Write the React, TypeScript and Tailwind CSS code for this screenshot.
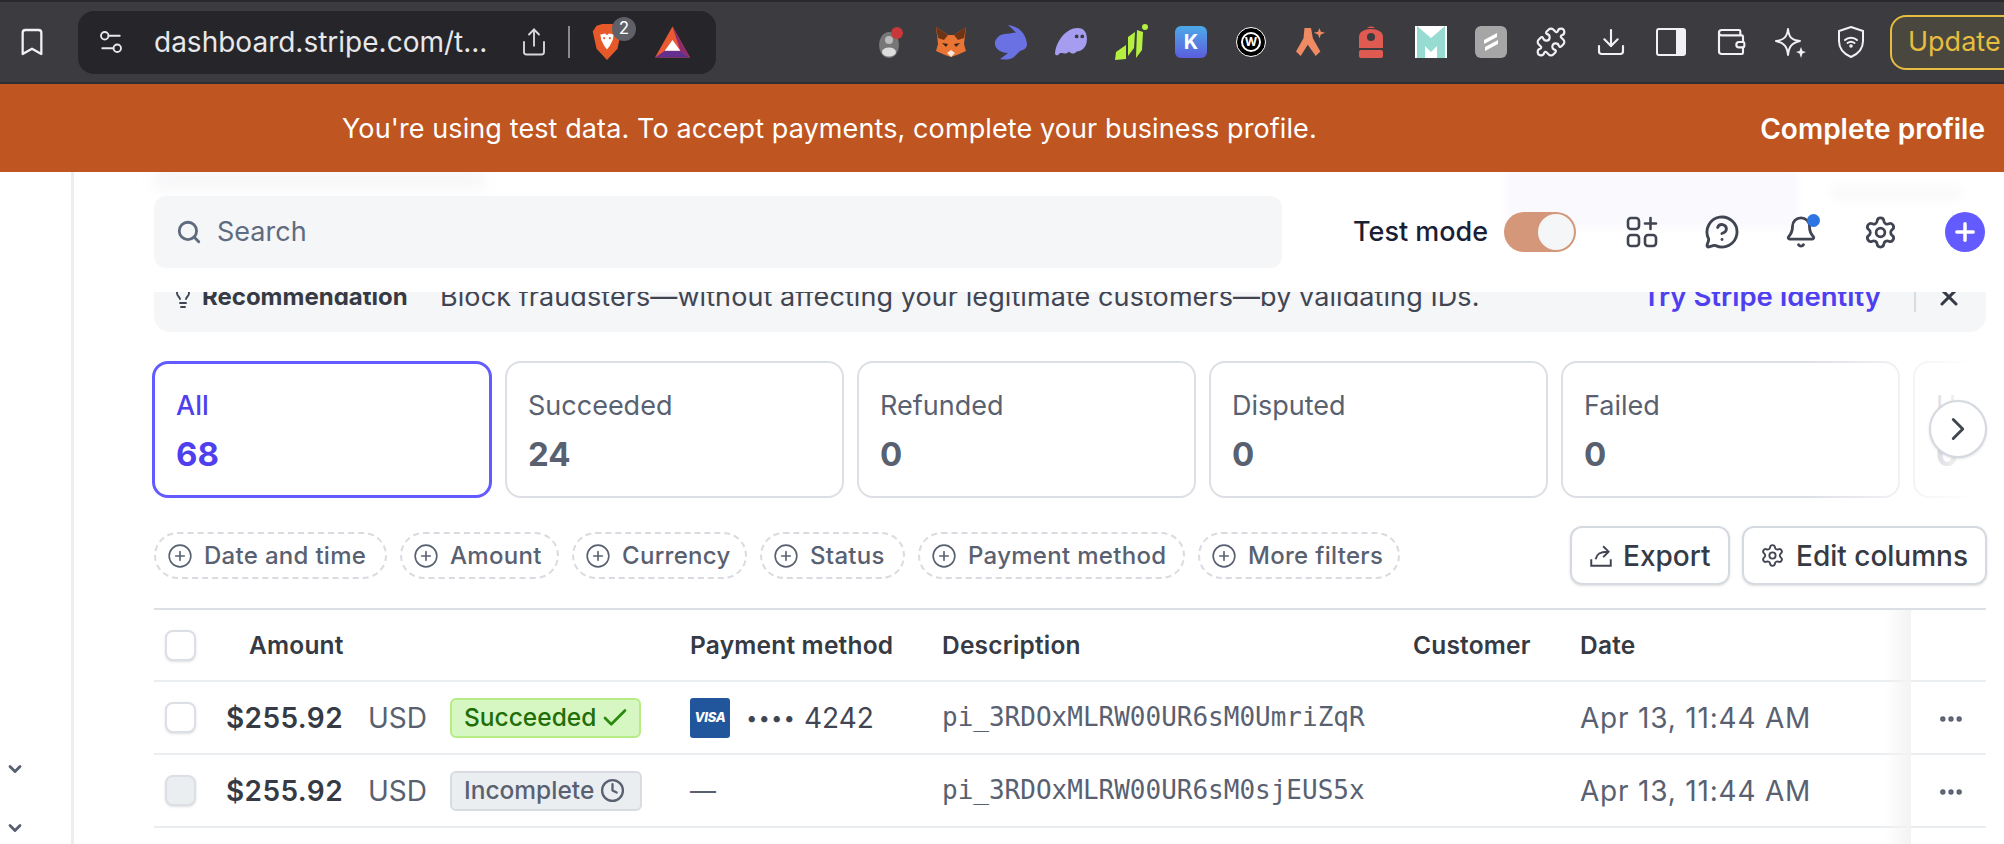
import React from "react"
import { Bell, Bookmark, Check, ChevronDown, ChevronRight, CirclePlus, Clock, Download, Ellipsis, Lightbulb, MessageCircleQuestion, Plus, Puzzle, Search, Settings, Settings2, Share, Wallet, X } from "lucide-react"

const font = "font-['Inter','Noto_Sans',sans-serif]"

const Tabs = [
    { label: "Succeeded", count: "24" },
    { label: "Refunded", count: "0" },
    { label: "Disputed", count: "0" },
    { label: "Failed", count: "0" },
]

const Filters = [
    { label: "Date and time", w: "w-[233px]" },
    { label: "Amount", w: "w-[159px]" },
    { label: "Currency", w: "w-[175px]" },
    { label: "Status", w: "w-[145px]" },
    { label: "Payment method", w: "w-[267px]" },
    { label: "More filters", w: "w-[202px]" },
]

const rowGrid = "grid grid-cols-[72px_464px_252px_471px_167px_1fr] items-center"

function BraveIcon() {
    return (
        <svg viewBox="0 0 32 40" className="w-[32px] h-[38px]">
            <path d="M5 3 L11 1 H21 L27 3 L31 9 L27 27 L16 39 L5 27 L1 9 Z" fill="#e8592a" />
            <path d="M9 12 L14 11 L16 13 L18 11 L23 12 L22 18 L19 24 L16 28 L13 24 L10 18 Z" fill="#fff" />
            <rect x="12" y="15" width="2" height="2" fill="#e8592a" />
            <rect x="18" y="15" width="2" height="2" fill="#e8592a" />
        </svg>
    )
}

function BatIcon() {
    return (
        <svg viewBox="0 0 36 32" className="w-[35px] h-[32px]">
            <path d="M18 0 L36 32 H0 Z" fill="#ea5a32" />
            <path d="M18 0 L36 32 L26 25 Z" fill="#8e2a6f" />
            <path d="M0 32 H36 L26 25 H10 Z" fill="#64308f" />
            <path d="M18 14 L26 25 H10 Z" fill="#fff" />
        </svg>
    )
}

function ExtIcon({ children }: { children: React.ReactNode }) {
    return <div className="w-[60px] shrink-0 flex justify-center items-center">{children}</div>
}

function Extensions() {
    return (
        <div className="flex items-center ml-[145px]">
            <ExtIcon>
                <svg viewBox="0 0 32 34" className="w-[32px] h-[34px]">
                    <ellipse cx="14" cy="20" rx="10" ry="13" fill="#777" />
                    <ellipse cx="14" cy="27" rx="7" ry="4.5" fill="#ddd" />
                    <circle cx="14" cy="15" r="4" fill="#bbb" />
                    <circle cx="22" cy="8" r="6" fill="#c8383a" />
                </svg>
            </ExtIcon>
            <ExtIcon>
                <svg viewBox="0 0 32 32" className="w-[32px] h-[32px]">
                    <path d="M1 1 L13 9 H19 L31 1 L29 18 L31 25 L22 29 L16 31 L10 29 L1 25 L3 18 Z" fill="#ea7434" />
                    <path d="M1 1 L13 9 L9 14 L3 12 Z M31 1 L19 9 L23 14 L29 12 Z" fill="#6e3416" />
                    <path d="M12 27 L16 24 L20 27 L16 31 Z" fill="#f5e7da" />
                    <path d="M7 17 L13 18 L11 21 Z M25 17 L19 18 L21 21 Z" fill="#33261c" />
                </svg>
            </ExtIcon>
            <ExtIcon>
                <svg viewBox="0 0 34 36" className="w-[34px] h-[36px]">
                    <path d="M14 1 C25 2 32 10 33 20 C33 24 30 26 26 27 L20 33 C16 36 11 36 6 35 L14 29 C6 29 0 24 1 18 C2 14 6 10 11 10 C15 10 19 8 22 9 C20 6 17 4 14 1 Z" fill="#6a71e3" />
                </svg>
            </ExtIcon>
            <ExtIcon>
                <svg viewBox="0 0 34 32" className="w-[34px] h-[30px]">
                    <path d="M0 28 C1 15 12 1 24 1 C31 1 34 6 34 13 C34 22 28 26 23 26 C21 29 17 29 15 26 C12 30 6 27 5 28 C3 31 0 31 0 28 Z" fill="#a79df0" />
                    <circle cx="23" cy="10" r="2" fill="#3b3b40" />
                    <circle cx="29" cy="10" r="2" fill="#3b3b40" />
                </svg>
            </ExtIcon>
            <ExtIcon>
                <svg viewBox="0 0 34 36" className="w-[34px] h-[36px]">
                    <path d="M1 36 L2 28 L12 21 L12 35 Z M14 32 L14 13 L21 8 L20 24 Z M22 34 L23 6 L29 8 L28 26 Z" fill="#b6f03e" />
                    <circle cx="31" cy="3" r="3" fill="#b6f03e" />
                </svg>
            </ExtIcon>
            <ExtIcon>
                <div className="w-[32px] h-[32px] rounded-md bg-gradient-to-b from-[#4aa9e8] to-[#5a5cdd] flex items-center justify-center text-white font-bold text-[20px] font-['Inter',sans-serif]">K</div>
            </ExtIcon>
            <ExtIcon>
                <div className="w-[30px] h-[30px] rounded-full bg-black border border-white flex items-center justify-center">
                    <div className="w-[20px] h-[20px] rounded-full border-2 border-white text-white font-bold text-[12px] leading-none flex items-center justify-center font-['Inter',sans-serif]">W</div>
                </div>
            </ExtIcon>
            <ExtIcon>
                <svg viewBox="0 0 32 32" className="w-[32px] h-[30px]">
                    <path d="M9 1 H16 L18 12 L26 26 L21 31 L12.5 19 L5 31 L0 26 L8 12 Z" fill="#ef8a62" />
                    <path d="M25 1 L26.5 5 L31 6 L26.5 8 L25 12 L23.5 8 L19 6 L23.5 5 Z" fill="#ef8a62" />
                </svg>
            </ExtIcon>
            <ExtIcon>
                <svg viewBox="0 0 24 32" className="w-[24px] h-[32px]">
                    <path d="M8 2 C10 0 14 0 16 2 Z" fill="#df5a50" />
                    <path d="M0 11 C0 6 5 3 12 3 C19 3 24 6 24 11 V22 H0 Z" fill="#df5a50" />
                    <rect y="24" width="24" height="8" rx="2" fill="#df5a50" />
                    <circle cx="12" cy="11" r="4" fill="#3b3b40" />
                </svg>
            </ExtIcon>
            <ExtIcon>
                <svg viewBox="0 0 32 32" className="w-[32px] h-[32px]">
                    <rect width="32" height="32" fill="#fff" />
                    <path d="M2 0 L16 12 L30 0 V32 H22 V20 L16 26 L10 20 V32 H2 Z" fill="#97dcd1" />
                </svg>
            </ExtIcon>
            <ExtIcon>
                <div className="w-[32px] h-[32px] rounded-md bg-[#a6a6a6] flex items-center justify-center">
                    <svg viewBox="0 0 32 32" className="w-[32px] h-[32px]">
                        <path d="M9 14 L22 7 V11 L9 18 Z M10 21 L23 14 V18 L10 25 Z" fill="#fff" />
                    </svg>
                </div>
            </ExtIcon>
            <ExtIcon><Puzzle className="w-[32px] h-[32px] text-[#f2f2f4]" strokeWidth={1.6} /></ExtIcon>
            <ExtIcon><Download className="w-[32px] h-[32px] text-[#f2f2f4]" strokeWidth={1.6} /></ExtIcon>
            <ExtIcon>
                <div className="w-[30px] h-[28px] rounded-[3px] border-2 border-[#f2f2f4] flex justify-end">
                    <div className="w-[8px] bg-[#f2f2f4]"></div>
                </div>
            </ExtIcon>
            <ExtIcon><Wallet className="w-[32px] h-[32px] text-[#f2f2f4]" strokeWidth={1.6} /></ExtIcon>
            <ExtIcon>
                <svg viewBox="0 0 32 32" fill="none" className="w-[32px] h-[32px]">
                    <path d="M13 3 C14 11 16 14 25 15 C17 17 14 20 13 29 C12 20 9 17 1 15 C9 14 12 11 13 3 Z" stroke="#f2f2f4" strokeWidth="2" strokeLinejoin="round" />
                    <path d="M26 21 L27.5 25 L31 26 L27.5 27.5 L26 32 L24.5 27.5 L21 26 L24.5 25 Z" fill="#f2f2f4" />
                </svg>
            </ExtIcon>
            <ExtIcon>
                <svg viewBox="0 0 28 32" fill="none" className="w-[28px] h-[32px]" stroke="#f2f2f4" strokeWidth="2">
                    <path d="M14 1 L26 5 V15 C26 23 21 28 14 31 C7 28 2 23 2 15 V5 Z" />
                    <path d="M8 14 C11 11 17 11 20 14 M10.5 17 C12.5 15.5 15.5 15.5 17.5 17" strokeLinecap="round" />
                    <circle cx="14" cy="20" r="0.8" />
                </svg>
            </ExtIcon>
            <div className="ml-[9px] shrink-0 w-[160px] h-[55px] rounded-[16px] border-2 border-[#e6bd3e] bg-[#4a473e] text-[#e6bd3e] text-[27px] flex items-center pl-[16px]">Update</div>
        </div>
    )
}

function BrowserBar() {
    return (
        <div className="h-[84px] bg-[#3b3b40] border-t-2 border-b-2 border-t-[#2a2a2e] border-b-[#2f2f33] flex items-center shrink-0 overflow-hidden">
            <div className="w-[78px] flex justify-center shrink-0 pr-[14px]">
                <Bookmark className="w-[32px] h-[34px] text-[#f2f2f4]" strokeWidth={1.7} />
            </div>
            <div className="w-[638px] h-[63px] shrink-0 rounded-[16px] bg-[#25252a] flex items-center relative text-[#e8e8ea]">
                <Settings2 className="w-[30px] h-[30px] ml-[18px] text-[#e8e8ea]" strokeWidth={1.5} />
                <span className="ml-[28px] text-[28px] whitespace-nowrap">dashboard.stripe.com/t...</span>
                <Share className="w-[30px] h-[32px] ml-[32px] text-[#d8d8da]" strokeWidth={1.5} />
                <div className="w-[2px] h-[32px] bg-[#8a8a8e] ml-[19px]"></div>
                <div className="ml-[21px]"><BraveIcon /></div>
                <div className="absolute left-[534px] top-[6px] w-[24px] h-[24px] rounded-full bg-[#5f6068] text-[17px] text-white flex items-center justify-center">2</div>
                <div className="ml-[32px]"><BatIcon /></div>
            </div>
            <Extensions />
        </div>
    )
}

function TestBanner() {
    return (
        <div className="h-[88px] bg-[#bf5520] text-white text-[27px] flex items-center shrink-0 relative z-10 pt-[2px]">
            <span className="ml-[342px] whitespace-nowrap tracking-[0.1px]">You're using test data. To accept payments, complete your business profile.</span>
            <span className="ml-auto mr-[19px] font-semibold text-[28px] whitespace-nowrap">Complete profile</span>
        </div>
    )
}

function TopNav() {
    return (
        <div className="h-[120px] relative flex items-start pt-[24px] shrink-0">
            <div className="absolute left-0 top-[-4px] w-[330px] h-[20px] bg-[#f6f6f8] blur-[8px]"></div>
            <div className="absolute left-[1353px] top-[-4px] w-[290px] h-[60px] bg-[#f9f9fe] blur-[5px]"></div>
            <div className="absolute left-[1676px] top-[13px] w-[133px] h-[16px] bg-[#fafafa] blur-[5px] rounded-full"></div>
            <div className="relative w-[1128px] h-[72px] rounded-[12px] bg-[#f5f6f8] flex items-center pl-[22px] text-[#5f6b7e] text-[27px] shrink-0">
                <Search className="w-[26px] h-[26px] text-[#5f6b7e]" strokeWidth={2.6} />
                <span className="ml-[15px]">Search</span>
            </div>
            <div className="relative flex items-center h-[72px] ml-[71px] shrink-0">
                <span className="text-[#1a1f36] text-[27px] w-[151px] whitespace-nowrap font-medium">Test mode</span>
                <div className="w-[72px] h-[40px] rounded-full bg-[#d59779] flex items-center justify-end pr-[2px]">
                    <div className="w-[36px] h-[36px] rounded-full bg-[#f5f6f8]"></div>
                </div>
                <svg viewBox="0 0 32 32" fill="none" stroke="#414552" strokeWidth="2.6" className="w-[32px] h-[32px] ml-[50px]">
                    <rect x="2" y="2" width="11" height="11" rx="3" />
                    <rect x="2" y="19" width="11" height="11" rx="3" />
                    <rect x="19" y="19" width="11" height="11" rx="3" />
                    <path d="M24.5 2 V13 M19 7.5 H30" strokeLinecap="round" />
                </svg>
                <MessageCircleQuestion className="w-[36px] h-[36px] ml-[46px] text-[#414552]" strokeWidth={1.9} />
                <div className="relative ml-[44px]">
                    <Bell className="w-[34px] h-[34px] text-[#414552]" strokeWidth={2} />
                    <div className="absolute right-[-2px] top-[-1px] w-[13px] h-[13px] rounded-full bg-[#2f74e3]"></div>
                </div>
                <Settings className="w-[35px] h-[35px] ml-[45px] text-[#414552]" strokeWidth={1.9} />
                <div className="w-[40px] h-[40px] rounded-full bg-[#635bff] flex items-center justify-center ml-[47px]">
                    <Plus className="w-[28px] h-[28px] text-white" strokeWidth={3} />
                </div>
            </div>
        </div>
    )
}

function Recommendation() {
    return (
        <div className="h-[40px] w-[1832px] rounded-b-[16px] bg-[#f5f6f8] overflow-hidden flex items-end pb-[20px] pl-[17px] shrink-0">
            <div className="flex items-center h-[30px] w-full">
                <Lightbulb className="w-[24px] h-[28px] text-[#414552] shrink-0" strokeWidth={1.9} />
                <span className="ml-[7px] font-bold text-[24px] text-[#353a44] w-[238px] whitespace-nowrap">Recommendation</span>
                <span className="text-[27px] tracking-[0.08px] text-[#414552] whitespace-nowrap">Block fraudsters—without affecting your legitimate customers—by validating IDs.</span>
                <span className="ml-auto text-[27.5px] font-semibold text-[#4f3fef] whitespace-nowrap">Try Stripe Identity</span>
                <div className="w-[2px] h-[30px] bg-[#d8dbe0] ml-[33px]"></div>
                <X className="w-[28px] h-[28px] ml-[19px] mr-[23px] text-[#353a44]" strokeWidth={2.6} />
            </div>
        </div>
    )
}

function TabCards() {
    return (
        <div className="relative flex gap-[13px] mt-[29px] ml-[-2px] shrink-0 overflow-hidden w-[1850px] h-[137px]">
            <div className="w-[340px] h-[137px] shrink-0 rounded-[16px] border-[3px] border-[#635bff] pl-[21px] pt-[24px]">
                <div className="text-[27px] leading-[36px] font-medium text-[#4f3fef]">All</div>
                <div className="text-[33px] leading-[40px] mt-[10px] font-bold text-[#4f3fef]">68</div>
            </div>
            {Tabs.map((t) => (
                <div key={t.label} className="w-[339px] h-[137px] shrink-0 rounded-[16px] border-2 border-[#dcdfe5] pl-[21px] pt-[25px]">
                    <div className="text-[27px] leading-[36px] text-[#596171]">{t.label}</div>
                    <div className="text-[33px] leading-[40px] mt-[10px] font-bold text-[#596171]">{t.count}</div>
                </div>
            ))}
            <div className="w-[339px] h-[137px] shrink-0 rounded-[16px] border-2 border-[#dcdfe5] pl-[21px] pt-[25px]">
                <div className="text-[27px] leading-[36px] text-[#596171]">Uncaptured</div>
                <div className="text-[33px] leading-[40px] mt-[10px] font-bold text-[#596171]">0</div>
            </div>
            <div className="absolute right-0 top-0 w-[200px] h-full bg-gradient-to-r from-transparent to-white to-85%"></div>
            <div className="absolute right-[15px] top-[39px] w-[58px] h-[58px] rounded-full bg-white border-2 border-[#d5d9e0] shadow-sm flex items-center justify-center">
                <ChevronRight className="w-[38px] h-[38px] text-[#414552]" strokeWidth={1.8} />
            </div>
        </div>
    )
}

function FilterBar() {
    return (
        <div className="flex items-center w-[1833px] mt-[28px] h-[59px] shrink-0">
            <div className="flex items-center gap-[13px]">
                {Filters.map((f) => (
                    <div key={f.label} className={`${f.w} h-[47px] rounded-full border-2 border-dashed border-[#d8dbe0] flex items-center pl-[11px] text-[#596171] text-[24px] font-medium whitespace-nowrap`}>
                        <CirclePlus className="w-[26px] h-[26px] text-[#596171] shrink-0" strokeWidth={1.5} />
                        <span className="ml-[11px] tracking-[0.3px]">{f.label}</span>
                    </div>
                ))}
            </div>
            <div className="ml-auto flex gap-[12px]">
                <div className="w-[160px] h-[59px] rounded-[12px] border-2 border-[#d5d9e0] shadow-sm flex items-center pl-[16px] text-[#353a44] text-[28px] font-medium">
                    <svg viewBox="0 0 24 24" fill="none" stroke="#414552" strokeWidth="1.8" className="w-[26px] h-[26px]">
                        <path d="M3 15 V21 H21 V15 M7 15 C8 10 11 8 18 8 M14 3 L19 8 L14 13" />
                    </svg>
                    <span className="ml-[9px]">Export</span>
                </div>
                <div className="w-[245px] h-[59px] rounded-[12px] border-2 border-[#d5d9e0] shadow-sm flex items-center pl-[16px] text-[#353a44] text-[28px] font-medium">
                    <Settings className="w-[25px] h-[25px] text-[#414552]" strokeWidth={1.8} />
                    <span className="ml-[11px] whitespace-nowrap">Edit columns</span>
                </div>
            </div>
        </div>
    )
}

function Checkbox({ muted }: { muted?: boolean }) {
    return (
        <div className="pl-[11px]">
            <div className={`w-[31px] h-[31px] rounded-[8px] border-2 border-[#dcdfe5] shadow-sm ${muted ? "bg-[#ebeef1]" : "bg-white"}`}></div>
        </div>
    )
}

function VisaMark() {
    return (
        <div className="w-[40px] h-[40px] rounded-[3px] bg-[#21569d] flex items-center justify-center text-white text-[13px] font-extrabold italic tracking-[-0.3px]">VISA</div>
    )
}

function PaymentsTable() {
    return (
        <div className="relative w-[1832px] mt-[23px] shrink-0">
            <div className={`${rowGrid} h-[74px] border-t-2 border-b-2 border-t-[#dcdfe5] border-b-[#ebeef1] text-[24.5px] font-semibold text-[#353a44] tracking-[0.2px]`}>
                <Checkbox />
                <div className="pl-[23px]">Amount</div>
                <div>Payment method</div>
                <div>Description</div>
                <div>Customer</div>
                <div>Date</div>
            </div>
            <div className={`${rowGrid} h-[73px] border-b-2 border-[#ebeef1]`}>
                <Checkbox />
                <div className="flex items-center">
                    <span className="text-[28px] font-semibold text-[#353a44] w-[142px] tracking-[0.4px]">$255.92</span>
                    <span className="text-[28px] text-[#596171] w-[82px]">USD</span>
                    <div className="w-[191px] h-[40px] rounded-[6px] border-2 border-[#b5ec83] bg-[#d7f7c2] flex items-center pl-[12px] text-[#216e08] text-[24.5px] font-medium whitespace-nowrap">
                        Succeeded
                        <Check className="w-[30px] h-[30px] ml-[4px] text-[#2b8a0f]" strokeWidth={2.2} />
                    </div>
                </div>
                <div className="flex items-center text-[28px] text-[#414552]">
                    <VisaMark />
                    <span className="ml-[17px] tracking-[3px] w-[57px] text-[20px] font-bold">••••</span>
                    <span>4242</span>
                </div>
                <div className="font-['DejaVu_Sans_Mono',monospace] text-[26px] text-[#596171] whitespace-nowrap">pi_3RDOxMLRW00UR6sM0UmriZqR</div>
                <div></div>
                <div className="text-[28px] tracking-[0.8px] text-[#596171] whitespace-nowrap">Apr 13, 11:44 AM</div>
            </div>
            <div className={`${rowGrid} h-[73px] border-b-2 border-[#ebeef1]`}>
                <Checkbox muted />
                <div className="flex items-center">
                    <span className="text-[28px] font-semibold text-[#353a44] w-[142px] tracking-[0.4px]">$255.92</span>
                    <span className="text-[28px] text-[#596171] w-[82px]">USD</span>
                    <div className="w-[192px] h-[40px] rounded-[6px] border-2 border-[#d8dbe0] bg-[#ebeef1] flex items-center pl-[12px] text-[#596171] text-[24.5px] font-medium whitespace-nowrap">
                        Incomplete
                        <Clock className="w-[25px] h-[25px] ml-[6px] text-[#596171]" strokeWidth={2.2} />
                    </div>
                </div>
                <div className="text-[26px] text-[#596171]">—</div>
                <div className="font-['DejaVu_Sans_Mono',monospace] text-[26px] text-[#596171] whitespace-nowrap">pi_3RDOxMLRW00UR6sM0sjEUS5x</div>
                <div></div>
                <div className="text-[28px] tracking-[0.8px] text-[#596171] whitespace-nowrap">Apr 13, 11:44 AM</div>
            </div>
            <div className="absolute left-[1731px] top-[2px] w-[26px] h-[240px] bg-gradient-to-r from-transparent to-[#f3f3f4]"></div>
            <Ellipsis className="absolute left-[1783px] top-[97px] w-[28px] h-[28px] text-[#596171]" strokeWidth={2.6} />
            <Ellipsis className="absolute left-[1783px] top-[170px] w-[28px] h-[28px] text-[#596171]" strokeWidth={2.6} />
        </div>
    )
}

export default function App() {
    return (
        <div className={`w-[2004px] h-[844px] overflow-hidden flex flex-col bg-white ${font}`}>
            <BrowserBar />
            <TestBanner />
            <div className="flex flex-1 min-h-0">
                <div className="w-[74px] shrink-0 border-r-[3px] border-[#ebeef1] flex flex-col items-start pl-[5px] pt-[587px] gap-[39px]">
                    <ChevronDown className="w-[20px] h-[20px] text-[#596171]" strokeWidth={3.4} />
                    <ChevronDown className="w-[20px] h-[20px] text-[#596171]" strokeWidth={3.4} />
                </div>
                <div className="flex flex-col pl-[80px] min-w-0">
                    <TopNav />
                    <Recommendation />
                    <TabCards />
                    <FilterBar />
                    <PaymentsTable />
                </div>
            </div>
        </div>
    )
}
